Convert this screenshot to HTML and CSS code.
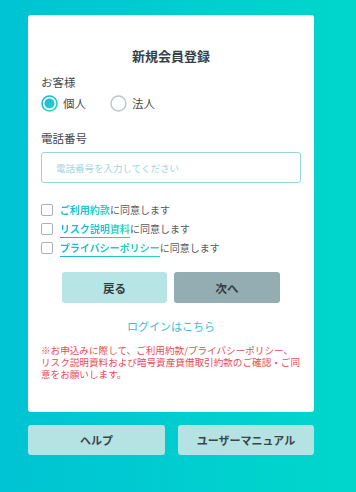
FILE: index.html
```html
<!DOCTYPE html>
<html lang="ja">
<head>
<meta charset="utf-8">
<link rel="stylesheet" href="styles.css">
</head>
<body>
<div class="page">
  <div class="card">
    <h1 class="title">新規会員登録</h1>
    <div class="label">お客様</div>
    <div class="radios">
      <label class="radio">
        <svg class="radio-icon" width="17" height="17" viewBox="0 0 17 17">
          <defs>
            <linearGradient id="g1" x1="0" y1="0" x2="1" y2="1">
              <stop offset="0" stop-color="#1cb4e2"/>
              <stop offset="1" stop-color="#22d8c0"/>
            </linearGradient>
          </defs>
          <circle cx="8.5" cy="8.5" r="7.5" fill="none" stroke="url(#g1)" stroke-width="1.6"/>
          <circle cx="8.5" cy="8.5" r="5" fill="url(#g1)"/>
        </svg>
        <span>個人</span>
      </label>
      <label class="radio">
        <svg class="radio-icon" width="17" height="17" viewBox="0 0 17 17">
          <circle cx="8.5" cy="8.5" r="7.5" fill="none" stroke="#b9c7cc" stroke-width="1.4"/>
        </svg>
        <span>法人</span>
      </label>
    </div>
    <div class="label label-phone">電話番号</div>
    <div class="input"><span class="placeholder">電話番号を入力してください</span></div>
    <div class="checks">
      <div class="check"><span class="box"></span><span class="link">ご利用約款</span><span class="plain">に同意します</span></div>
      <div class="check"><span class="box"></span><span class="link ul">リスク説明資料</span><span class="plain">に同意します</span></div>
      <div class="check"><span class="box"></span><span class="link ul">プライバシーポリシー</span><span class="plain">に同意します</span></div>
    </div>
    <div class="actions">
      <div class="btn btn-back">戻る</div>
      <div class="btn btn-next">次へ</div>
    </div>
    <div class="login">ログインはこちら</div>
    <p class="note">※お申込みに際して、ご利用約款/プライバシーポリシー、リスク説明資料および暗号資産貸借取引約款のご確認・ご同意をお願いします。</p>
  </div>
  <div class="footer">
    <div class="fbtn">ヘルプ</div>
    <div class="fbtn">ユーザーマニュアル</div>
  </div>
</div>
</body>
</html>
```

FILE: styles.css
```css
* { box-sizing: border-box; }
html, body { margin: 0; padding: 0; }
body {
  width: 356px;
  height: 492px;
  overflow: hidden;
  font-family: "Noto Sans CJK JP", "Noto Sans", sans-serif;
  background: linear-gradient(90deg, #00c3d3 0%, #00cdd0 50%, #00d7cb 100%);
}
.page {
  padding: 15px 42px 0 28px;
}
.card {
  background: #fff;
  border-radius: 3px;
  padding: 31px 13px 32px 13px;
  display: flex;
  flex-direction: column;
}
.title {
  margin: 0;
  font-size: 13px;
  line-height: 20px;
  font-weight: 700;
  text-align: center;
  color: #36424a;
}
.label {
  margin-top: 8px;
  font-size: 11.5px;
  line-height: 16px;
  color: #444b50;
}
.label-phone { margin-top: 18px; }
.radios {
  margin-top: 4px;
  display: flex;
  gap: 24px;
  height: 18px;
  align-items: center;
}
.radio {
  display: flex;
  align-items: center;
  gap: 5px;
  font-size: 11.5px;
  color: #444b50;
}
.radio-icon { display: block; }
.input {
  margin-top: 6px;
  height: 31px;
  border: 1px solid #93d6dc;
  border-radius: 3px;
  display: flex;
  align-items: center;
  padding-left: 14px;
}
.placeholder {
  font-size: 9.5px;
  color: #9fd6dd;
}
.checks {
  margin-top: 17px;
  display: flex;
  flex-direction: column;
}
.check {
  height: 19px;
  display: flex;
  align-items: center;
  font-size: 10px;
}
.box {
  width: 12px;
  height: 12px;
  border: 1px solid #aab0b3;
  border-radius: 2px;
  margin-right: 7px;
  flex: none;
}
.link {
  font-weight: 700;
  background: linear-gradient(90deg, #1ab3df, #2bd6b8);
  -webkit-background-clip: text;
  background-clip: text;
  color: transparent;
  position: relative;
}
.link.ul::after {
  content: "";
  position: absolute;
  left: 0;
  right: 0;
  bottom: -2px;
  height: 1px;
  background: linear-gradient(90deg, #1ab3df, #2bd6b8);
}
.plain { color: #555b60; }
.actions {
  margin-top: 15px;
  display: flex;
  justify-content: center;
  gap: 7px;
}
.btn {
  width: 105px;
  height: 31px;
  border-radius: 3px;
  display: flex;
  align-items: center;
  justify-content: center;
  font-size: 11.5px;
  font-weight: 700;
  color: #2f3a40;
}
.btn-back { background: #b7e5e5; }
.btn-next { background: #94adb2; width: 106px; }
.login {
  margin-top: 15px;
  text-align: center;
  font-size: 11px;
  line-height: 16px;
  color: #3cc0cd;
}
.note {
  margin: 10px 0 0 0;
  font-size: 9.6px;
  line-height: 12px;
  color: #e84b52;
}
.footer {
  margin-top: 13px;
  display: flex;
  justify-content: space-between;
}
.fbtn {
  width: 137px;
  height: 30px;
  border-radius: 3px;
  background: #b5e3e3;
  display: flex;
  align-items: center;
  justify-content: center;
  font-size: 11px;
  font-weight: 700;
  color: #3a454b;
}
.fbtn + .fbtn { width: 136px; }
```
